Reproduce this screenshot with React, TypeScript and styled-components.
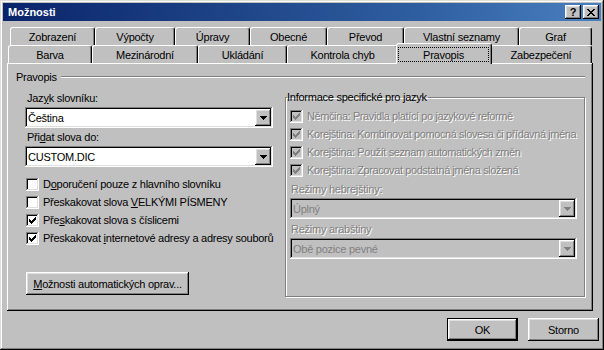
import * as React from 'react'
import styled, { createGlobalStyle, css } from 'styled-components'

const GlobalStyle = createGlobalStyle`
  html, body {
    margin: 0;
    padding: 0;
    background: #c0c0c0;
  }
  body {
    font-family: 'Liberation Sans', Arial, sans-serif;
    font-size: 11px;
    letter-spacing: -0.25px;
    color: #000;
  }
`

const raised = css`
  box-shadow: inset -1px -1px #000, inset 1px 1px #fff, inset -2px -2px #808080,
    inset 2px 2px #dfdfdf;
`
const sunken = css`
  box-shadow: inset -1px -1px #fff, inset 1px 1px #808080, inset -2px -2px #dfdfdf,
    inset 2px 2px #000;
`

const topRow = [
  { label: 'Zobrazení', w: 85 },
  { label: 'Výpočty', w: 80 },
  { label: 'Úpravy', w: 75 },
  { label: 'Obecné', w: 77 },
  { label: 'Převod', w: 77 },
  { label: 'Vlastní seznamy', w: 115 },
  { label: 'Graf', w: 73 },
]
const frontRow = [
  { label: 'Barva', w: 84 },
  { label: 'Mezinárodní', w: 106 },
  { label: 'Ukládání', w: 89 },
  { label: 'Kontrola chyb', w: 111 },
  { label: 'Pravopis', w: 92, active: true },
  { label: 'Zabezpečení', w: 102 },
]

const Check = () => (
  <svg width="7" height="7" viewBox="0 0 7 7" shapeRendering="crispEdges">
    {[2, 3, 4, 3, 2, 1, 0].map((y, x) => (
      <rect key={x} x={x} y={y} width="1" height="3" fill="currentColor" />
    ))}
  </svg>
)

const Arrow = () => (
  <svg width="7" height="4" viewBox="0 0 7 4" shapeRendering="crispEdges">
    {[0, 1, 2, 3].map(i => (
      <rect key={i} x={i} y={i} width={7 - i * 2} height="1" fill="currentColor" />
    ))}
  </svg>
)

const CloseGlyph = () => (
  <svg width="8" height="7" viewBox="0 0 8 7" shapeRendering="crispEdges">
    {[0, 1, 2, 3, 4, 5, 6].map(i => (
      <React.Fragment key={i}>
        <rect x={i} y={i} width="2" height="1" fill="#000" />
        <rect x={6 - i} y={i} width="2" height="1" fill="#000" />
      </React.Fragment>
    ))}
  </svg>
)

type CheckProps = { checked?: boolean; disabled?: boolean; children: React.ReactNode }

const CheckRow: React.FC<CheckProps> = props => (
  <CheckLine $disabled={props.disabled}>
    <Box $disabled={props.disabled}>{props.checked && <Check />}</Box>
    <span>{props.children}</span>
  </CheckLine>
)

type ComboProps = { value: string; disabled?: boolean; width: number }

const Combo: React.FC<ComboProps> = props => (
  <Field $w={props.width} $disabled={props.disabled}>
    <FieldText>{props.value}</FieldText>
    <DropButton $disabled={props.disabled}>
      <Arrow />
    </DropButton>
  </Field>
)

const App: React.FC = () => {
  return (
    <Window>
      <GlobalStyle />
      <TitleBar>
        <Title>Možnosti</Title>
        <TitleButton>?</TitleButton>
        <TitleButton>
          <CloseGlyph />
        </TitleButton>
      </TitleBar>
      <Body>
        <TabRow $indent={3}>
          {topRow.map(t => (
            <Tab key={t.label} $w={t.w}>
              {t.label}
            </Tab>
          ))}
        </TabRow>
        <TabRow $indent={1}>
          {frontRow.map(t =>
            t.active ? (
              <ActiveTab key={t.label} $w={t.w}>
                <Focus>{t.label}</Focus>
              </ActiveTab>
            ) : (
              <Tab key={t.label} $w={t.w}>
                {t.label}
              </Tab>
            )
          )}
        </TabRow>
        <Panel>
          <Heading>
            <span>Pravopis</span>
            <Rule />
          </Heading>
          <Columns>
            <LeftCol>
              <Label>
                Jaz<u>y</u>k slovníku:
              </Label>
              <Combo value="Čeština" width={248} />
              <Label>
                Při<u>d</u>at slova do:
              </Label>
              <Combo value="CUSTOM.DIC" width={248} />
              <CheckList>
                <CheckRow>
                  D<u>o</u>poručení pouze z hlavního slovníku
                </CheckRow>
                <CheckRow>
                  Přeskakovat slova <u>V</u>ELKÝMI PÍSMENY
                </CheckRow>
                <CheckRow checked>
                  Pře<u>s</u>kakovat slova s číslicemi
                </CheckRow>
                <CheckRow checked>
                  Přeskakovat <u>i</u>nternetové adresy a adresy souborů
                </CheckRow>
              </CheckList>
              <Button $w={163}>
                <u>M</u>ožnosti automatických oprav...
              </Button>
            </LeftCol>
            <Group>
              <Legend>Informace specifické pro jazyk</Legend>
              <CheckRow checked disabled>
                Němčina: Pravidla platící po jazykové reformě
              </CheckRow>
              <CheckRow checked disabled>
                Korejština: Kombinovat pomocná slovesa či přídavná jména
              </CheckRow>
              <CheckRow checked disabled>
                Korejština: Použít seznam automatických změn
              </CheckRow>
              <CheckRow checked disabled>
                Korejština: Zpracovat podstatná jména složená
              </CheckRow>
              <SubLabel>Režimy hebrejštiny:</SubLabel>
              <Combo value="Úplný" width={287} disabled />
              <SubLabel>Režimy arabštiny</SubLabel>
              <Combo value="Obě pozice pevné" width={287} disabled />
            </Group>
          </Columns>
        </Panel>
        <Footer>
          <DefaultButton $w={71}>OK</DefaultButton>
          <Button $w={71}>Storno</Button>
        </Footer>
      </Body>
    </Window>
  )
}

const Window = styled.div`
  width: 604px;
  height: 350px;
  box-sizing: border-box;
  padding: 3px;
  background: #c0c0c0;
  box-shadow: inset -1px -1px #000, inset 1px 1px #dfdfdf, inset -2px -2px #808080,
    inset 2px 2px #fff;
  overflow: hidden;
`
const TitleBar = styled.div`
  display: flex;
  align-items: center;
  height: 18px;
  padding: 0 2px 0 5px;
  background: linear-gradient(to right, #0a246a, #2f5fa0 70%, #4a7fc0);
`
const Title = styled.div`
  flex: 1;
  color: #fff;
  font-weight: bold;
  font-size: 11px;
  letter-spacing: 0;
`
const TitleButton = styled.div`
  width: 16px;
  height: 14px;
  margin-left: 2px;
  display: flex;
  align-items: center;
  justify-content: center;
  font-weight: bold;
  font-size: 11px;
  line-height: 14px;
  background: #c0c0c0;
  ${raised}
`
const Body = styled.div`
  padding: 6px 0 0 4px;
`
const TabRow = styled.div<{ $indent: number }>`
  display: flex;
  height: 18px;
  margin-left: ${p => p.$indent}px;
`
const Tab = styled.div<{ $w: number }>`
  width: ${p => p.$w}px;
  box-sizing: border-box;
  display: flex;
  align-items: center;
  justify-content: center;
  border-top: 1px solid #fff;
  border-left: 1px solid #fff;
  border-right: 1px solid #000;
  border-top-left-radius: 3px;
  border-top-right-radius: 3px;
  box-shadow: inset -1px 0 #808080;
  padding-top: 1px;
  white-space: nowrap;
`
const ActiveTab = styled(Tab)`
  position: relative;
  z-index: 1;
  height: 21px;
  margin: -2px -2px -1px;
  width: ${p => p.$w + 4}px;
  background: #c0c0c0;
  padding: 2px 2px 1px 1px;
`
const Focus = styled.span`
  display: flex;
  align-items: center;
  justify-content: center;
  width: 100%;
  height: 15px;
  box-sizing: border-box;
  border: 1px dotted #000;
`
const Panel = styled.div`
  width: 586px;
  height: 248px;
  box-sizing: border-box;
  padding: 8px 8px 0 9px;
  box-shadow: inset -1px -1px #000, inset 1px 1px #fff, inset -2px -2px #808080;
`
const Heading = styled.div`
  display: flex;
  align-items: center;
  gap: 4px;
  height: 12px;
`
const Rule = styled.div`
  flex: 1;
  border-top: 1px solid #808080;
  border-bottom: 1px solid #fff;
`
const Columns = styled.div`
  display: flex;
  align-items: flex-start;
  gap: 12px;
  margin-top: 8px;
  padding-left: 9px;
`
const LeftCol = styled.div`
  width: 248px;
  display: flex;
  flex-direction: column;
  align-items: flex-start;
`
const Label = styled.div`
  height: 14px;
  line-height: 14px;
  margin: 0 0 2px 2px;
  & + div {
    margin-bottom: 2px;
  }
`
const Field = styled.div<{ $w: number; $disabled?: boolean }>`
  width: ${p => p.$w}px;
  height: 21px;
  box-sizing: border-box;
  padding: 2px;
  display: flex;
  align-items: center;
  background: ${p => (p.$disabled ? '#c0c0c0' : '#fff')};
  color: ${p => (p.$disabled ? '#808080' : '#000')};
  ${sunken}
`
const FieldText = styled.div`
  flex: 1;
  padding-left: 1px;
  white-space: nowrap;
`
const DropButton = styled.div<{ $disabled?: boolean }>`
  width: 16px;
  height: 17px;
  display: flex;
  align-items: center;
  justify-content: center;
  color: ${p => (p.$disabled ? '#808080' : '#000')};
  background: #c0c0c0;
  ${raised}
`
const CheckList = styled.div`
  margin-top: 6px;
`
const CheckLine = styled.div<{ $disabled?: boolean }>`
  display: flex;
  align-items: center;
  gap: 4px;
  height: 18px;
  padding-left: 1px;
  white-space: nowrap;
  color: ${p => (p.$disabled ? '#808080' : '#000')};
  text-shadow: ${p => (p.$disabled ? '1px 1px #fff' : 'none')};
  letter-spacing: ${p => (p.$disabled ? '-0.4px' : '-0.25px')};
`
const Box = styled.div<{ $disabled?: boolean }>`
  width: 13px;
  height: 13px;
  flex: none;
  box-sizing: border-box;
  display: flex;
  align-items: center;
  justify-content: center;
  background: ${p => (p.$disabled ? '#c0c0c0' : '#fff')};
  color: ${p => (p.$disabled ? '#808080' : '#000')};
  ${sunken}
`
const Button = styled.div<{ $w: number }>`
  width: ${p => p.$w}px;
  height: 23px;
  box-sizing: border-box;
  display: flex;
  align-items: center;
  justify-content: center;
  background: #c0c0c0;
  ${raised}
  ${LeftCol} & {
    margin: 25px 0 0 1px;
  }
`
const DefaultButton = styled(Button)`
  border: 1px solid #000;
`
const Group = styled.fieldset`
  width: 300px;
  height: 206px;
  box-sizing: border-box;
  margin: 0;
  padding: 3px 0 0 3px;
  border: 1px solid #808080;
  box-shadow: inset 1px 1px #fff, 1px 1px #fff;
  & > div:nth-of-type(n + 5) {
    margin-left: 1px;
  }
`
const Legend = styled.legend`
  padding: 0 1px 0 0;
  margin-left: -2px;
  line-height: 13px;
`
const SubLabel = styled.div`
  height: 14px;
  line-height: 14px;
  margin-top: 3px;
  padding-left: 1px;
  color: #808080;
  text-shadow: 1px 1px #fff;
  & + div {
    margin-top: 2px;
  }
`
const Footer = styled.div`
  display: flex;
  justify-content: flex-end;
  gap: 10px;
  width: 592px;
  margin-top: 7px;
`

export default App
